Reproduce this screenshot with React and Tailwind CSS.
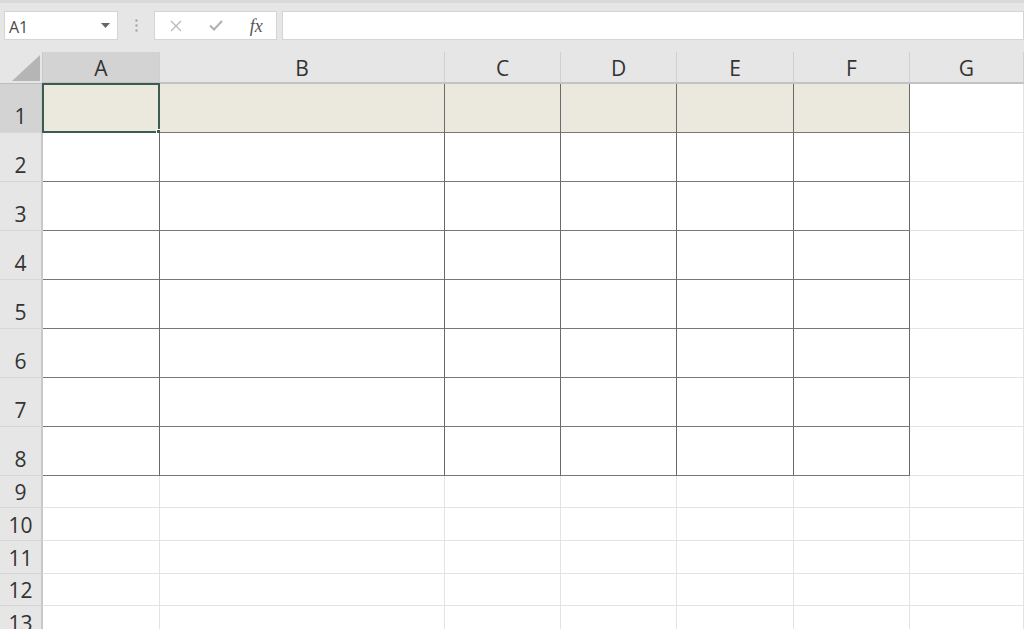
import { Fragment } from "react";

const cols = ["A", "B", "C", "D", "E", "F", "G"];
const rows = [1, 2, 3, 4, 5, 6, 7, 8, 9, 10, 11, 12, 13];

function cellBorder(c, r) {
  // table region A-F, rows 1-8 has dark borders
  const inTable = c < 6 && r <= 8;
  let cls = "";
  if (inTable) cls += " border-r border-b border-r-[#6a6a6a] border-b-[#777]";
  else {
    cls += " border-r border-b border-r-[#e3e3e3] border-b-[#e3e3e3]";
  }
  if (r === 1 && c < 6) cls += " bg-[#ebe8dd]";
  else cls += " bg-white";
  return cls;
}

function App() {
  return (
    <div className="w-[1024px] h-[629px] overflow-hidden bg-white" style={{ fontFamily: '"Open Sans", "Noto Sans", sans-serif' }}>
      {/* formula bar */}
      <div className="h-[52px] bg-[#e6e6e6] border-t-[3px] border-[#dadada] flex items-start pt-[8px] pl-[4px]">
        <div className="w-[114px] h-[29px] bg-white border border-[#d5d5d5] flex items-center justify-between pl-[4px] pr-[7px]">
          <span className="text-[16px] text-[#4a4a4a] leading-none pt-[2px]">A1</span>
          <svg width="9" height="5" viewBox="0 0 9 5"><path d="M0 0h9L4.5 5z" fill="#666" /></svg>
        </div>
        <div className="w-[36px] h-[29px] flex items-center justify-center">
          <svg width="3" height="13" viewBox="0 0 3 13">
            <circle cx="1.5" cy="1.5" r="1.2" fill="#a8a8a8" />
            <circle cx="1.5" cy="6.5" r="1.2" fill="#a8a8a8" />
            <circle cx="1.5" cy="11.5" r="1.2" fill="#a8a8a8" />
          </svg>
        </div>
        <div className="w-[123px] h-[29px] bg-white border border-[#d5d5d5] flex items-center">
          <div className="w-[40px] flex justify-center pl-[3px]">
            <svg width="12" height="12" viewBox="0 0 12 12"><path d="M1 1l10 10M11 1L1 11" stroke="#b8b8b8" strokeWidth="1.3" /></svg>
          </div>
          <div className="w-[42px] flex justify-center">
            <svg width="14" height="11" viewBox="0 0 14 11"><path d="M1 5.5l4 4L13 1" stroke="#b0b0b0" strokeWidth="2" fill="none" /></svg>
          </div>
          <div className="w-[40px] flex justify-center">
            <span className="text-[18px] italic text-[#555] leading-none" style={{ fontFamily: '"Liberation Serif", serif' }}>fx</span>
          </div>
        </div>
        <div className="ml-[5px] flex-1 h-[29px] bg-white border border-[#d5d5d5]" />
      </div>

      {/* sheet */}
      <div
        className="grid grid-cols-[43px_117px_285px_116px_116px_117px_116px_1fr] grid-rows-[32px_repeat(8,49px)_32px_33px_33px_32px_33px] text-[#333]"
      >
        {/* corner */}
        <div className="bg-[#e6e6e6] border-r border-b border-r-[#c8c8c8] border-b-[#bdbdbd] flex items-end justify-end pr-[2px] pb-[2px]">
          <svg width="28" height="26" viewBox="0 0 28 26"><path d="M28 0V26H0z" fill="#b5b5b5" /></svg>
        </div>
        {cols.map((c, i) => (
          <div
            key={c}
            className={`flex items-center justify-center text-[21px] leading-none border-b-2 border-b-[#c2c2c2] border-r border-r-[#d0d0d0] ${i === 0 ? "bg-[#d3d3d3]" : "bg-[#e6e6e6]"}`}
          >
            <span className="pt-[3px]">{c}</span>
          </div>
        ))}

        {rows.map((r) => (
          <Fragment key={r}>
            <div
              className={`flex items-end justify-center text-[21px] leading-none border-r-2 border-r-[#c8c8c8] border-b border-b-[#d6d6d6] ${r <= 8 ? "pb-[5px]" : "pb-[4px]"} ${r === 1 ? "bg-[#d3d3d3]" : "bg-[#e6e6e6]"}`}
            >
              {r}
            </div>
            {cols.map((c, ci) => (
              <div key={c} className={`relative ${cellBorder(ci, r)}`}>
                {r === 1 && ci === 0 && (
                  <div className="absolute -left-[1px] -top-[1px] -right-[1px] -bottom-[1px] border-2 border-[#3d5c50]">
                    <div className="absolute -right-[4px] -bottom-[4px] w-[6px] h-[6px] bg-[#3d5c50] border border-white" />
                  </div>
                )}
              </div>
            ))}
          </Fragment>
        ))}
      </div>
    </div>
  );
}

export default App;
